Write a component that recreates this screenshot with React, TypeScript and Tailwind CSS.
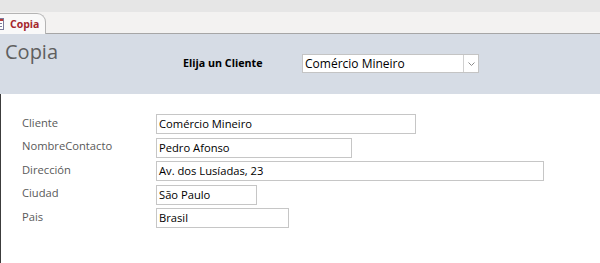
const fields = [
  { label: "Cliente", value: "Comércio Mineiro", width: "w-[260px]" },
  { label: "NombreContacto", value: "Pedro Afonso", width: "w-[196px]" },
  { label: "Dirección", value: "Av. dos Lusíadas, 23", width: "w-[388px]" },
  { label: "Ciudad", value: "São Paulo", width: "w-[101px]" },
  { label: "Pais", value: "Brasil", width: "w-[133px]" },
];

function FormIcon() {
  return (
    <svg width="12" height="12" viewBox="0 0 12 12" className="shrink-0 -ml-[8px]">
      <rect x="0.5" y="0.5" width="11" height="11" fill="#fff" stroke="#7b7b9b" />
      <rect x="1" y="1" width="10" height="2" fill="#b73a3a" />
      <line x1="3" y1="5.5" x2="10" y2="5.5" stroke="#7b7b9b" />
      <line x1="3" y1="8.5" x2="10" y2="8.5" stroke="#7b7b9b" />
    </svg>
  );
}

export default function App() {
  return (
    <div className="w-[600px] h-[263px] overflow-hidden bg-white flex flex-col font-['Open_Sans',sans-serif]">
      {/* top strip */}
      <div className="h-[12px] bg-[#e6e6e6] shrink-0" />
      {/* tab bar */}
      <div className="h-[22px] bg-[#f3f2f1] border-b border-[#a6a6a6] flex items-end shrink-0">
        <div className="h-[21px] w-[46px] bg-[#f9f9f9] border-t border-r border-[#b4b4b4] rounded-tr-[9px] flex items-center gap-[6px] -mb-px">
          <FormIcon />
          <span className="text-[10.5px] font-bold text-[#a4262c] leading-none">Copia</span>
        </div>
      </div>
      {/* header */}
      <div className="h-[60px] bg-[#d6dce5] flex shrink-0">
        <div className="pl-[5px] pt-[4px] text-[20px] leading-[28px] text-[#5f5f5f]">Copia</div>
        <div className="ml-[125px] flex items-center pb-[1px]">
          <span className="w-[119px] text-[10.7px] font-bold text-black">Elija un Cliente</span>
          <div className="w-[177px] h-[19px] bg-white border border-[#c4c4c4] flex items-center">
            <span className="flex-1 pl-[2px] text-[12px] text-black leading-none">Comércio Mineiro</span>
            <div className="w-[15px] h-full border-l border-[#d0d0d0] flex items-center justify-center">
              <svg width="7" height="4" viewBox="0 0 7 4">
                <path d="M0.5 0.5 L3.5 3.5 L6.5 0.5" fill="none" stroke="#8a8a8a" strokeWidth="1" />
              </svg>
            </div>
          </div>
        </div>
      </div>
      {/* body */}
      <div className="flex-1 border-l border-[#3c3c3c] pt-[20px] pl-[20px] flex flex-col gap-[3.5px]">
        {fields.map((f) => (
          <div key={f.label} className="flex items-center h-[20px]">
            <span className="w-[135px] pl-[1px] text-[11.2px] text-[#595959] -mt-[2px]">{f.label}</span>
            <div className={`${f.width} h-[20px] border border-[#c6c6c6] flex items-center pl-[2px]`}>
              <span className="text-[11.2px] text-black leading-none">{f.value}</span>
            </div>
          </div>
        ))}
      </div>
    </div>
  );
}
